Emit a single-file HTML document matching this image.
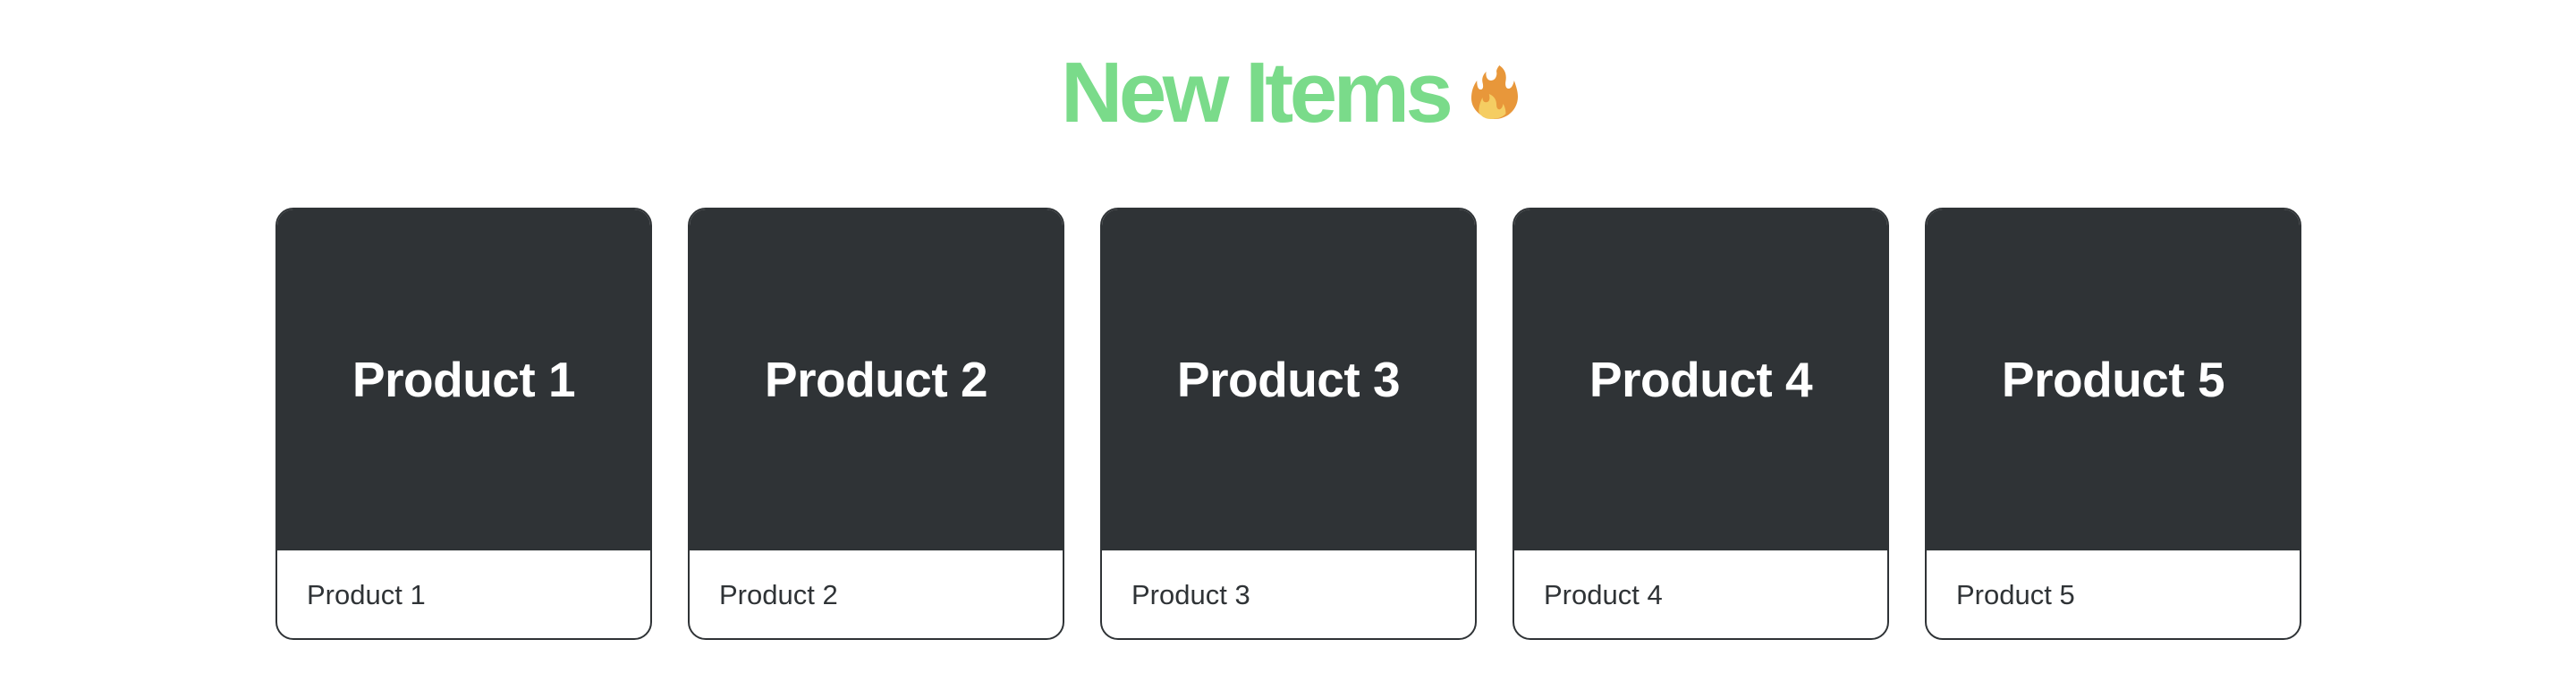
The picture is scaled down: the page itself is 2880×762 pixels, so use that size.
<!DOCTYPE html>
<html><head><meta charset="utf-8"><style>
html,body{margin:0;padding:0;background:#fff;width:2880px;height:762px;overflow:hidden}
.title{position:absolute;left:1186px;top:28px;font-family:"Liberation Sans",sans-serif;font-weight:bold;font-size:96px;letter-spacing:-4.5px;color:#7ADB8A;line-height:152px;height:152px;white-space:nowrap}
.flame{position:absolute;left:1645px;top:73px;width:52px;height:60px}
.card{position:absolute;top:232px;width:417px;height:479px;border:2px solid #2f3336;border-radius:20px;overflow:hidden;background:#fff;box-sizing:content-box}
.img{height:381px;background:#2F3336;color:#fff;font-family:"Liberation Sans",sans-serif;font-weight:bold;font-size:55px;text-align:center;line-height:381px;letter-spacing:-0.5px}
.lbl{font-family:"Liberation Sans",sans-serif;font-size:31px;color:#2f3336;padding-left:33px;line-height:100px}
</style></head><body>
<div class="title">New Items</div>
<svg class="flame" viewBox="0 0 50 60" preserveAspectRatio="none">
<path d="M30 0c6 4 8 10 7 17-1 5 0 9 3 9 3 0 5-4 6-9 2 6 4 12 4 18 0 14-11 25-25 25S0 49 0 37c0-8 2-14 6-20 0 6 1 10 4 10 3 0 3-4 2-8-1-5 1-9 4-12-1 5 1 10 5 10 5 0 7-6 6-10 0-3 2-5 3-7z" fill="#E8973A"/>
<path d="M12 36c0 4 2 6 5 5 3-1 3-5 2-9 5 2 8 6 8 12 0 4 2 6 4 5 2-1 3-4 3-6 2 3 3 7 3 11-3 4-9 6-16 6-6 0-11-3-13-8 0-7 2-12 4-16z" fill="#F5CD62"/>
</svg>
<div class="card" style="left:308px"><div class="img">Product 1</div><div class="lbl">Product 1</div></div>
<div class="card" style="left:769px"><div class="img">Product 2</div><div class="lbl">Product 2</div></div>
<div class="card" style="left:1230px"><div class="img">Product 3</div><div class="lbl">Product 3</div></div>
<div class="card" style="left:1691px"><div class="img">Product 4</div><div class="lbl">Product 4</div></div>
<div class="card" style="left:2152px"><div class="img">Product 5</div><div class="lbl">Product 5</div></div>
</body></html>
